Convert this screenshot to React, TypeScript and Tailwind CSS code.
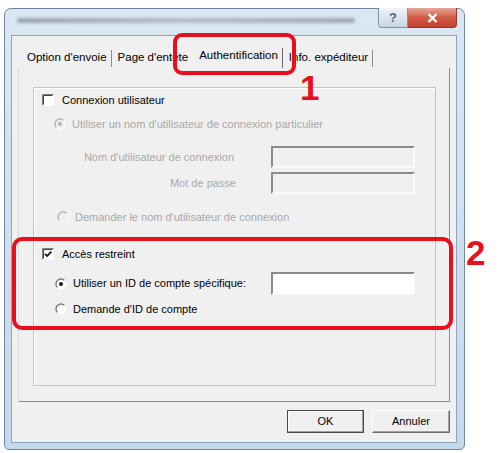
import React from "react";

function Radio({ on, disabled }: { on?: boolean; disabled?: boolean }) {
  const dark = disabled ? "#b4b4b4" : "#7a7a7a";
  const dot = disabled ? "#b0b0b0" : "#1a1a1a";
  return (
    <svg width="12" height="12" viewBox="0 0 12 12" className="shrink-0">
      <circle cx="6" cy="6" r="5" fill={disabled ? "#f0f0f0" : "#ffffff"} />
      <path d="M2.46 9.54 A5 5 0 0 1 9.54 2.46" fill="none" stroke={dark} strokeWidth="1.4" />
      <path d="M9.54 2.46 A5 5 0 0 1 2.46 9.54" fill="none" stroke="#ffffff" strokeWidth="1" />
      {on && <circle cx="6" cy="6" r="2" fill={dot} />}
    </svg>
  );
}

function Check({ on }: { on?: boolean }) {
  return (
    <svg width="12" height="12" viewBox="0 0 12 12" className="shrink-0">
      <rect x="0" y="0" width="12" height="12" fill="#ffffff" />
      <path d="M0.5 11.5 V0.5 H11.5" fill="none" stroke="#808080" strokeWidth="1" />
      <path d="M1.5 10.5 V1.5 H10.5" fill="none" stroke="#404040" strokeWidth="1" />
      {on && <path d="M3 5.8 L5.1 8 L9.4 3.6" fill="none" stroke="#111111" strokeWidth="1.8" />}
    </svg>
  );
}

function Field({ white }: { white?: boolean }) {
  return (
    <div
      className={`h-full w-[144px] border-2 border-t-[#8a8a8a] border-l-[#8a8a8a] border-b-[#fafafa] border-r-[#fafafa] ${
        white ? "bg-white" : "bg-[#f0f0f0]"
      }`}
    />
  );
}

export default function App() {
  const on = "text-black";
  const off = "text-[#a8a8a8]";
  return (
    <div
      className="relative w-[501px] h-[453px] bg-white pt-[8px] pl-[4px] text-[11px] leading-none"
      style={{ fontFamily: '"Liberation Sans", Arial, sans-serif' }}
    >
      {/* window */}
      <div className="w-[461px] h-[442px] rounded-t-[7px] rounded-b-[5px] border border-[#6f86a0] bg-gradient-to-b from-[#dbe7f3] to-[#c6d8eb] pl-[6px] pr-[7px] pb-[6px] flex flex-col">
        {/* title bar */}
        <div className="h-[26px] flex items-start shrink-0">
          <div className="flex-1 pt-[9px] pl-[6px] pr-[20px]">
            <div className="h-[5px] w-[338px] rounded-full bg-gradient-to-r from-[#9aa4ae] via-[#b3bcc5] to-[#9ea8b2] blur-[1.5px]" />
          </div>
          <div className="-mt-px flex">
            <div className="w-[30px] h-[20px] rounded-bl-[4px] border border-t-0 border-[#8193a8] bg-gradient-to-b from-[#eef3f8] to-[#c9d6e4] flex items-center justify-center text-[#51637a] text-[13px] font-bold">
              ?
            </div>
            <div className="w-[49px] h-[20px] rounded-br-[4px] border border-l-0 border-t-0 border-[#8a3a2e] bg-gradient-to-b from-[#e6a695] via-[#cf5b45] to-[#c2402c] flex items-center justify-center">
              <svg width="11" height="10" viewBox="0 0 11 10">
                <path d="M1.5 1 L9.5 9 M9.5 1 L1.5 9" stroke="#ffffff" strokeWidth="2.4" />
              </svg>
            </div>
          </div>
        </div>

        {/* client area */}
        <div className="h-[408px] border border-[#8ca4be] bg-[#f0f0f0] flex flex-col">
          {/* tabs */}
          <div className="h-[32px] shrink-0 flex items-start pl-[15px] pt-[14px] text-[11.5px] text-black whitespace-nowrap">
            <span className="mt-[2px]">Option d&apos;envoie</span>
            <span className="w-px h-[17px] bg-[#8a8a8a] ml-[4px]" />
            <span className="mt-[2px] ml-[6px]">Page d&apos;entête</span>
            <span className="ml-[11px]">Authentification</span>
            <span className="w-px h-[20px] -mt-[2px] bg-[#6a6a6a] ml-[4px]" />
            <span className="mt-[2px] ml-[6px]">Info. expéditeur</span>
            <span className="w-px h-[17px] bg-[#8a8a8a] ml-[4px]" />
          </div>

          {/* tab panel */}
          <div className="mx-[6px] h-[334px] shrink-0 border-l border-r border-b border-l-[#dedede] border-r-[#8c8c8c] border-b-[#8c8c8c] pt-[19px] pl-[14px] pr-[13px]">
            <div className="h-[299px] border border-[#c4c4c4] shadow-[inset_1px_1px_0_#ffffff] pt-[4px]">
              <div className="h-[16px] flex items-center pl-[8px] gap-[8px] text-black">
                <Check />
                <span>Connexion utilisateur</span>
              </div>
              <div className={`h-[16px] mt-[8px] flex items-center pl-[20px] gap-[6px] ${off}`}>
                <Radio on disabled />
                <span>Utiliser un nom d&apos;utilisateur de connexion particulier</span>
              </div>
              <div className={`h-[22px] mt-[14px] flex items-center ${off}`}>
                <span className="w-[200px] text-right">Nom d&apos;utilisateur de connexion</span>
                <span className="w-[37px]" />
                <Field />
              </div>
              <div className={`h-[22px] mt-[4px] flex items-center ${off}`}>
                <span className="w-[202px] text-right">Mot de passe</span>
                <span className="w-[35px]" />
                <Field />
              </div>
              <div className={`h-[16px] mt-[15px] flex items-center pl-[23px] gap-[6px] ${off}`}>
                <Radio disabled />
                <span>Demander le nom d&apos;utilisateur de connexion</span>
              </div>
              <div className={`h-[16px] mt-[21px] flex items-center pl-[8px] gap-[8px] ${on}`}>
                <Check on />
                <span>Accès restreint</span>
              </div>
              <div className={`h-[23px] mt-[10px] flex items-center pl-[21px] ${on}`}>
                <Radio on />
                <span className="ml-[6px] w-[198px]">Utiliser un ID de compte spécifique:</span>
                <Field white />
              </div>
              <div className={`h-[16px] mt-[6px] flex items-center pl-[21px] gap-[6px] ${on}`}>
                <Radio />
                <span>Demande d&apos;ID de compte</span>
              </div>
            </div>
          </div>

          {/* buttons */}
          <div className="mt-[8px] flex justify-end gap-[8px] pr-[6px] text-black">
            <button className="w-[77px] h-[23px] border border-[#4a4a4a] bg-[#f0f0f0] shadow-[inset_-1px_-1px_0_#a0a0a0,inset_1px_1px_0_#ffffff]">
              OK
            </button>
            <button className="w-[78px] h-[23px] border border-t-[#ffffff] border-l-[#ffffff] border-r-[#6a6a6a] border-b-[#6a6a6a] bg-[#f0f0f0] shadow-[inset_-1px_-1px_0_#a0a0a0]">
              Annuler
            </button>
          </div>
        </div>
      </div>

      {/* callouts */}
      <div className="absolute left-[173px] top-[33px] w-[123px] h-[42px] rounded-[9px] border-[4px] border-[#e8101c]" />
      <div className="absolute left-[300px] top-[70px] text-[35px] font-bold text-[#e8101c] leading-none">1</div>
      <div className="absolute left-[12px] top-[237px] w-[441px] h-[93px] rounded-[10px] border-[4px] border-[#e8101c]" />
      <div className="absolute left-[466px] top-[235px] text-[35px] font-bold text-[#e8101c] leading-none">2</div>
    </div>
  );
}
